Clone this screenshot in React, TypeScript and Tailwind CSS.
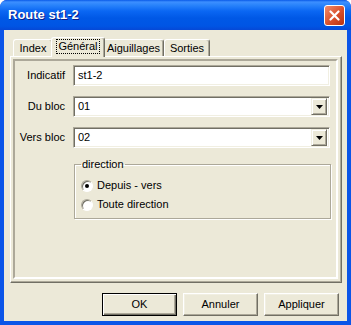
import React from "react";

const tabs = [
  { label: "Index", w: "w-[40px]" },
  { label: "Général", w: "w-[54px]", active: true },
  { label: "Aiguillages", w: "w-[61px]" },
  { label: "Sorties", w: "w-[46px]" },
];

function Tab({ label, w, active }: { label: string; w: string; active?: boolean }) {
  return (
    <div
      className={`${w} flex items-center justify-center rounded-t-[3px] border-t border-l border-r border-t-white border-l-white border-r-[#716f64] bg-[#ece9d8] shadow-[inset_-1px_0_0_#aca899] ${
        active ? "relative z-10 -mx-[2px] h-[20px] -mb-[1px] pb-[2px]" : "h-[17px]"
      }`}
    >
      {active ? (
        <span className="border border-dotted border-black px-[1px] leading-[13px]">{label}</span>
      ) : (
        <span className="leading-[13px]">{label}</span>
      )}
    </div>
  );
}

function Field({ label, value, select }: { label: string; value: string; select?: boolean }) {
  return (
    <div className="flex items-center">
      <div className="w-[50px] text-right whitespace-nowrap">{label}</div>
      <div className="ml-[8px] flex h-[21px] w-[257px] items-center border border-t-[#aca899] border-l-[#aca899] border-r-white border-b-white bg-white shadow-[inset_1px_1px_0_#716f64,inset_-1px_-1px_0_#f1efe2] p-[2px]">
        <span className="flex-1 pl-[2px]">{value}</span>
        {select && (
          <div className="flex h-[17px] w-[16px] items-center justify-center border border-t-[#f1efe2] border-l-[#f1efe2] border-r-[#716f64] border-b-[#716f64] bg-[#ece9d8] shadow-[inset_1px_1px_0_#fff,inset_-1px_-1px_0_#aca899]">
            <svg width="7" height="4" viewBox="0 0 7 4">
              <path d="M0 0h7L3.5 4z" fill="#000" />
            </svg>
          </div>
        )}
      </div>
    </div>
  );
}

function Radio({ label, checked }: { label: string; checked?: boolean }) {
  return (
    <div className="flex items-center h-[13px]">
      <div className="flex h-[12px] w-[12px] items-center justify-center rounded-full border border-t-[#aca899] border-l-[#aca899] border-r-white border-b-white bg-white shadow-[inset_1px_1px_0_#716f64]">
        {checked && <div className="h-[4px] w-[4px] rounded-full bg-black" />}
      </div>
      <span className="ml-[4px]">{label}</span>
    </div>
  );
}

function Button({ label, isDefault }: { label: string; isDefault?: boolean }) {
  return (
    <div
      className={`flex h-[23px] w-[75px] items-center justify-center bg-[#ece9d8] ${
        isDefault
          ? "border border-black shadow-[inset_1px_1px_0_#fff,inset_-1px_-1px_0_#716f64,inset_-2px_-2px_0_#aca899]"
          : "border border-t-white border-l-white border-r-[#716f64] border-b-[#716f64] shadow-[inset_-1px_-1px_0_#aca899,inset_1px_1px_0_#f1efe2]"
      }`}
    >
      {label}
    </div>
  );
}

export default function App() {
  return (
    <div className="h-[325px] w-[351px] bg-white font-['Liberation_Sans',Arial,sans-serif] text-[11px] text-black">
      <div className="flex h-[325px] w-[351px] flex-col overflow-hidden rounded-t-[7px] bg-[#0831d9]">
        {/* title bar */}
        <div className="flex h-[30px] items-center justify-between bg-[linear-gradient(180deg,#0a5ae8_0px,#3d8fff_2px,#2a84fb_5px,#0b67f3_11px,#0058e6_18px,#0055e4_26px,#0648d6_30px)] pl-[8px] pr-[6px]">
          <span className="text-[13px] font-bold text-white [text-shadow:1px_1px_0_#0a1e8a]">
            Route st1-2
          </span>
          <div className="flex h-[21px] w-[21px] items-center justify-center rounded-[3px] border border-white bg-[linear-gradient(135deg,#f08c6c,#d94f2b_55%,#b8320f)]">
            <svg width="11" height="11" viewBox="0 0 11 11">
              <path d="M1.5 1.5l8 8M9.5 1.5l-8 8" stroke="#fff" strokeWidth="2.2" strokeLinecap="round" />
            </svg>
          </div>
        </div>

        {/* client area */}
        <div className="flex flex-1 flex-col border-x-4 border-b-4 border-[#0b55e8] bg-[#ece9d8] pl-[6px] pr-[5px] pt-[7px]">
          <div className="relative z-10 flex h-[19px] items-end pl-[3px]">
            {tabs.map((t) => (
              <Tab key={t.label} {...t} />
            ))}
          </div>

          <div className="h-[227px] border border-t-white border-l-white border-r-[#716f64] border-b-[#716f64] shadow-[inset_-1px_-1px_0_#aca899] pb-[3px] pl-[2px] pr-[3px] pt-[2px]">
            <div className="flex h-full flex-col border-2 border-t-[#aca899] border-l-[#aca899] border-r-white border-b-white pt-[4px]">
              <div className="flex flex-col gap-[10px]">
                <Field label="Indicatif" value="st1-2" />
                <Field label="Du bloc" value="01" select />
                <Field label="Vers bloc" value="02" select />
              </div>

              <fieldset className="ml-[59px] mt-[10px] w-[257px] border border-[#aca899] shadow-[1px_1px_0_#fff,inset_1px_1px_0_#fff] pb-[7px] pl-[6px]">
                <legend className="px-[1px] leading-[13px]">direction</legend>
                <div className="flex flex-col gap-[6px] pt-[8px]">
                  <Radio label="Depuis - vers" checked />
                  <Radio label="Toute direction" />
                </div>
              </fieldset>
            </div>
          </div>

          <div className="mt-[10px] flex justify-end gap-[6px] pr-[3px]">
            <Button label="OK" isDefault />
            <Button label="Annuler" />
            <Button label="Appliquer" />
          </div>
        </div>
      </div>
    </div>
  );
}
